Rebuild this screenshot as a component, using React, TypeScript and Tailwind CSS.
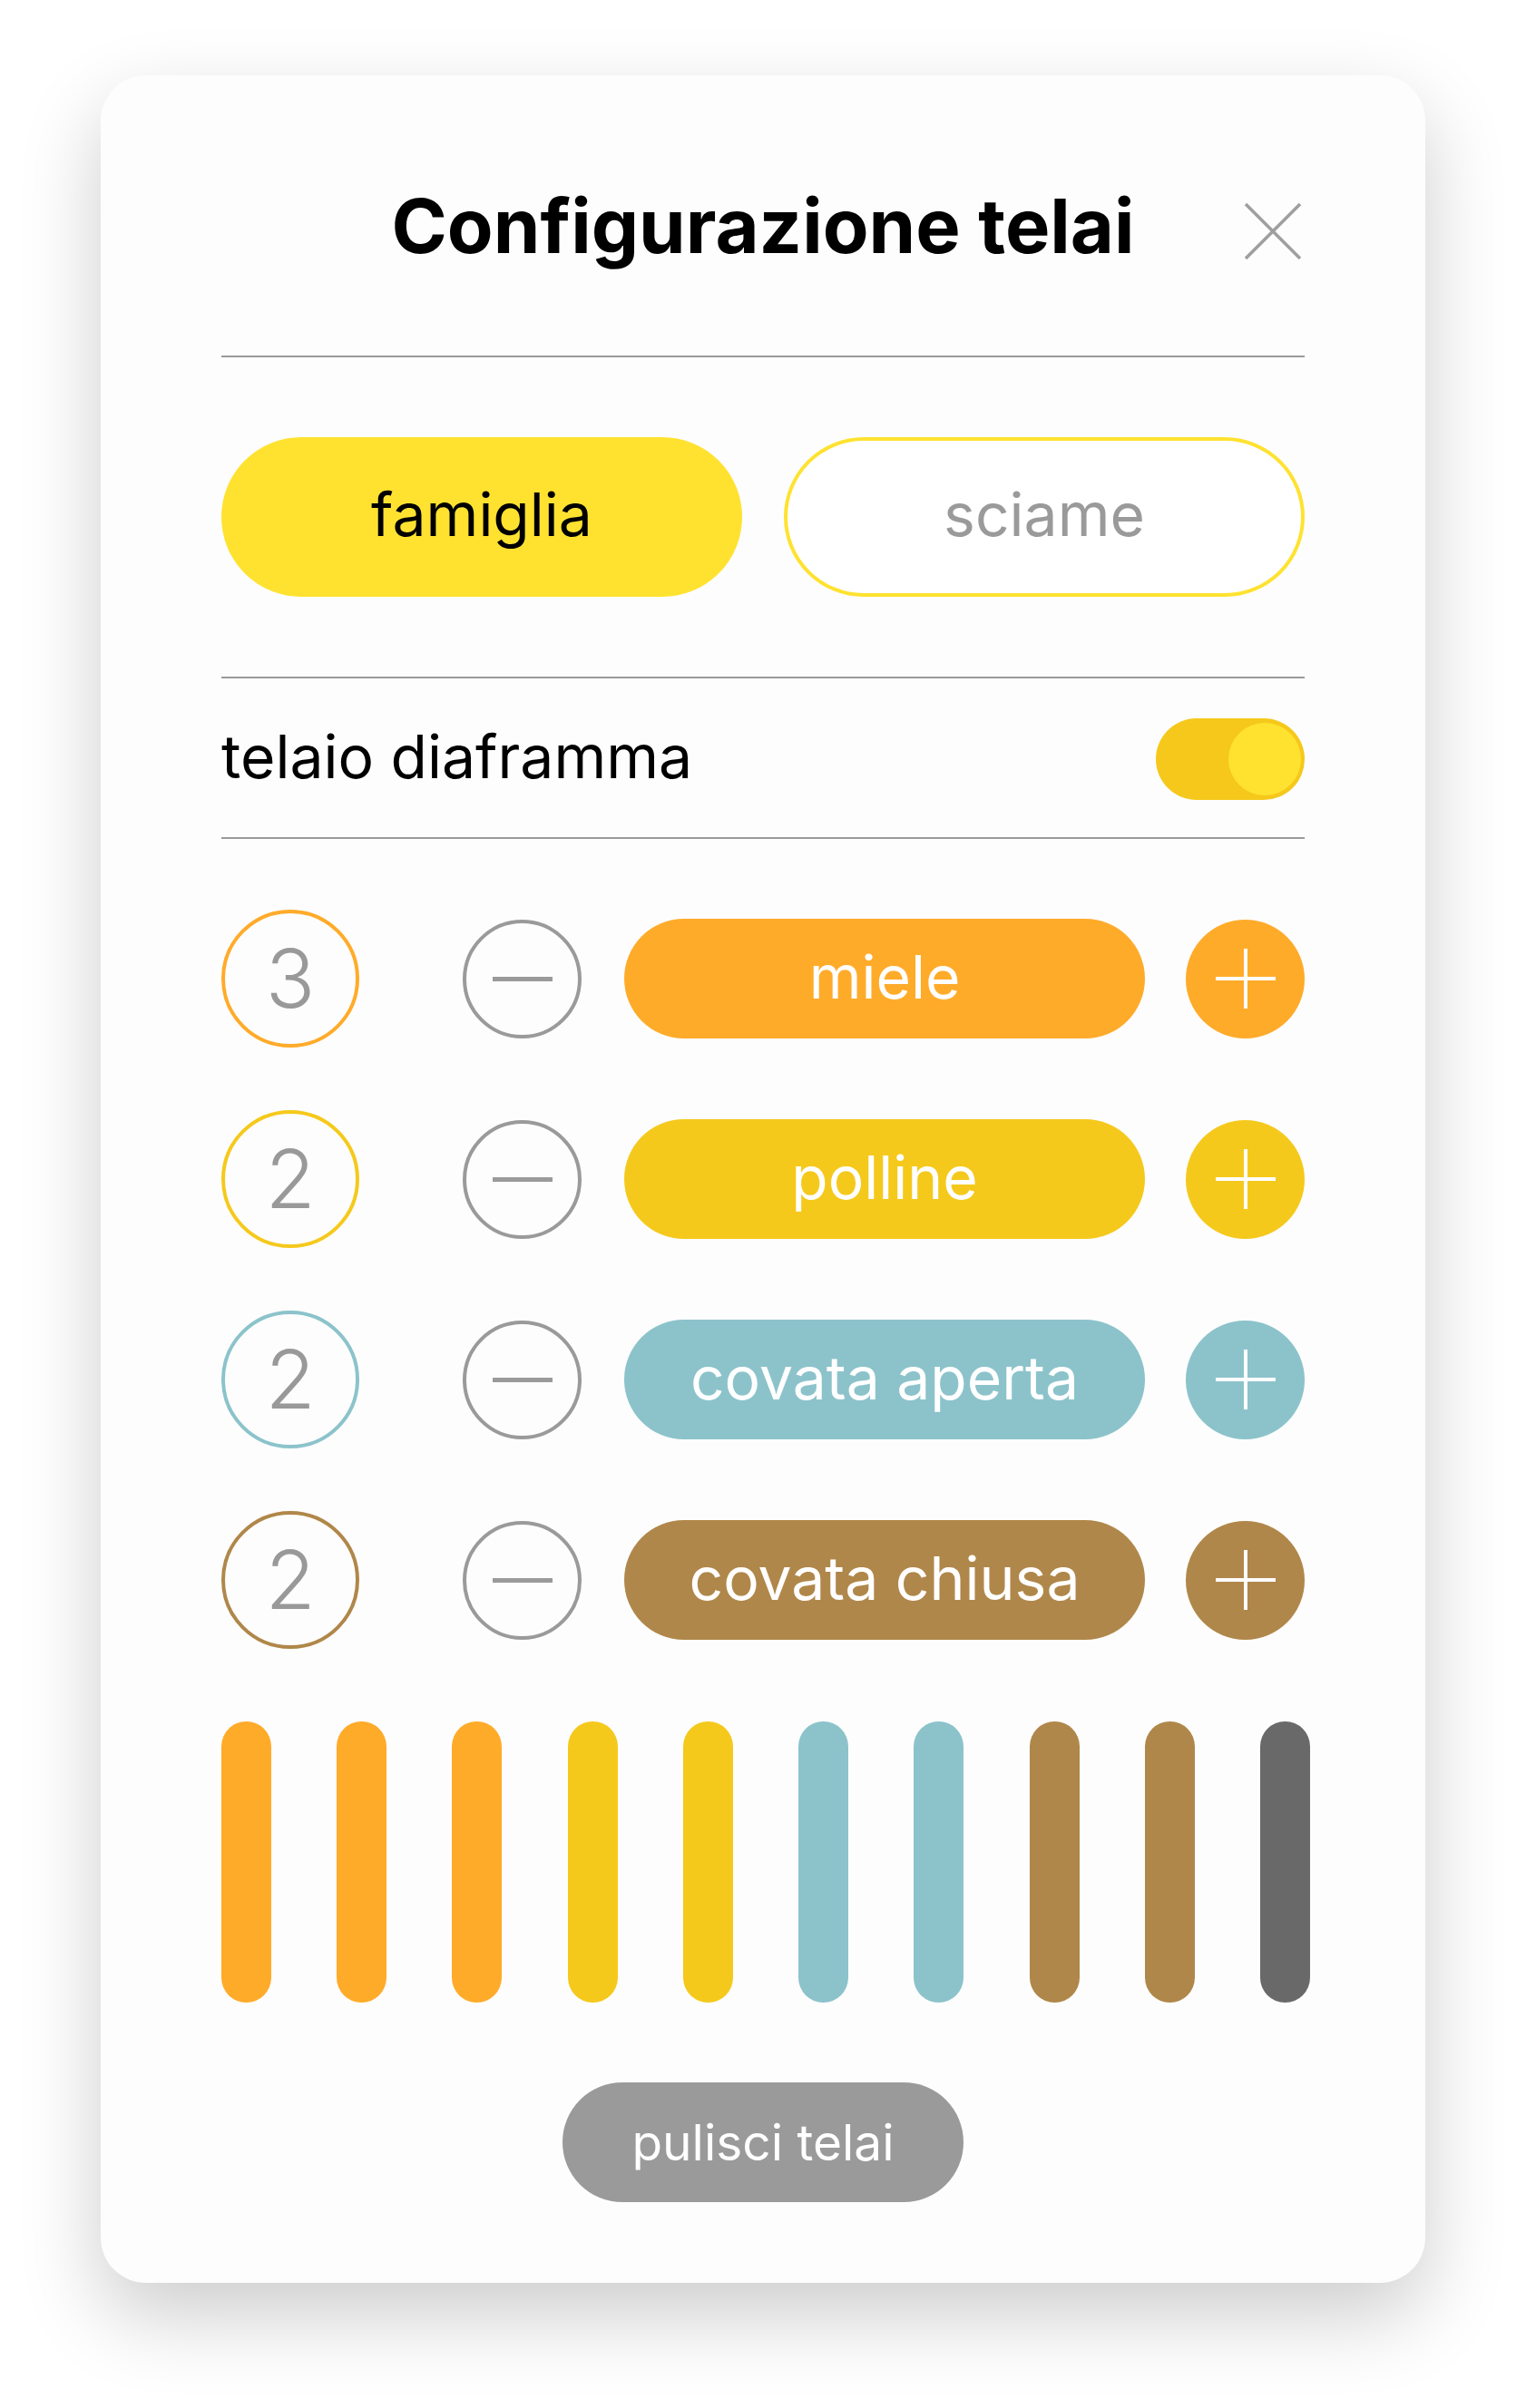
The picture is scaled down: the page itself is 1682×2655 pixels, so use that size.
import React, { useState } from "react";

type Frame = {
  label: string;
  count: number;
  bg: string;
  ring: string;
};

const frames: Frame[] = [
  { label: "miele", count: 3, bg: "bg-[#FFAB2A]", ring: "border-[#FFAB2A]" },
  { label: "polline", count: 2, bg: "bg-[#F5C91C]", ring: "border-[#F5C91C]" },
  { label: "covata aperta", count: 2, bg: "bg-[#8CC3CB]", ring: "border-[#8CC3CB]" },
  { label: "covata chiusa", count: 2, bg: "bg-[#B0874A]", ring: "border-[#B0874A]" },
];

const stripes = [
  "bg-[#FFAB2A]",
  "bg-[#FFAB2A]",
  "bg-[#FFAB2A]",
  "bg-[#F5C91C]",
  "bg-[#F5C91C]",
  "bg-[#8CC3CB]",
  "bg-[#8CC3CB]",
  "bg-[#B0874A]",
  "bg-[#B0874A]",
  "bg-[#696969]",
];

const Divider = ({ className = "" }: { className?: string }) => (
  <div className={`h-[2px] w-full bg-[#9a9a9a] ${className}`} />
);

const FrameRow = ({ frame }: { frame: Frame }) => (
  <div className="flex h-[152px] items-center">
    <div
      className={`flex h-[152px] w-[152px] shrink-0 items-center justify-center rounded-full border-[4px] ${frame.ring}`}
    >
      <span className="text-[90px] font-light leading-none text-[#999999]">
        {frame.count}
      </span>
    </div>
    <button className="ml-[114px] flex h-[131px] w-[131px] shrink-0 items-center justify-center rounded-full border-[4px] border-[#9a9a9a]">
      <span className="block h-[5px] w-[66px] bg-[#9a9a9a]" />
    </button>
    <div
      className={`ml-[47px] flex h-[132px] w-[574px] shrink-0 items-center justify-center rounded-full ${frame.bg}`}
    >
      <span className="mb-[5px] text-[66px] leading-none text-white">
        {frame.label}
      </span>
    </div>
    <button
      className={`ml-[45px] flex h-[131px] w-[131px] shrink-0 items-center justify-center rounded-full ${frame.bg}`}
    >
      <svg width="68" height="68" viewBox="0 0 68 68">
        <line x1="34" y1="1" x2="34" y2="67" stroke="white" strokeWidth="4" />
        <line x1="1" y1="34" x2="67" y2="34" stroke="white" strokeWidth="4" />
      </svg>
    </button>
  </div>
);

export default function App() {
  const [mode, setMode] = useState("famiglia");
  const [diaframma, setDiaframma] = useState(true);

  return (
    <div className="flex min-h-[2655px] w-full justify-center bg-white pt-[83px] font-[Inter,sans-serif]">
      <div className="h-fit w-[1460px] rounded-[50px] bg-[#fdfdfd] px-[133px] pb-[89px] pt-[125px] shadow-[0_36px_90px_rgba(0,0,0,0.2)]">
        <div className="grid grid-cols-[1fr_auto_1fr] items-start">
          <div />
          <h1 className="text-[83px] font-bold leading-none text-black">
            Configurazione telai
          </h1>
          <button className="mr-[3px] mt-[15px] justify-self-end">
            <svg width="64" height="64" viewBox="0 0 64 64">
              <line x1="2" y1="2" x2="62" y2="62" stroke="#9f9f9f" strokeWidth="3.5" />
              <line x1="62" y1="2" x2="2" y2="62" stroke="#9f9f9f" strokeWidth="3.5" />
            </svg>
          </button>
        </div>

        <Divider className="mt-[101px]" />

        <div className="mt-[88px] grid grid-cols-2 gap-[46px]">
          {["famiglia", "sciame"].map((m) => (
            <button
              key={m}
              onClick={() => setMode(m)}
              className={`flex h-[176px] items-center justify-center rounded-full border-[4px] border-[#FFE230] pb-[6px] text-[66px] leading-none ${
                mode === m ? "bg-[#FFE230] text-black" : "bg-white text-[#9a9a9a]"
              }`}
            >
              {m}
            </button>
          ))}
        </div>

        <Divider className="mt-[88px]" />

        <div className="mt-[44px] flex h-[90px] items-center justify-between">
          <span className="mb-[6px] text-[66px] leading-none text-black">
            telaio diaframma
          </span>
          <button
            onClick={() => setDiaframma(!diaframma)}
            className={`flex h-[90px] w-[164px] items-center rounded-full px-[4px] ${
              diaframma ? "justify-end bg-[#F5C81B]" : "justify-start bg-[#d9d9d9]"
            }`}
          >
            <span className="block h-[80px] w-[80px] rounded-full bg-[#FFE230]" />
          </button>
        </div>

        <Divider className="mt-[41px]" />

        <div className="mt-[78px] flex flex-col gap-[69px]">
          {frames.map((f) => (
            <FrameRow key={f.label} frame={f} />
          ))}
        </div>

        <div className="mr-[-6px] mt-[80px] flex justify-between">
          {stripes.map((c, i) => (
            <div key={i} className={`h-[310px] w-[55px] rounded-full ${c}`} />
          ))}
        </div>

        <div className="mt-[88px] flex justify-center">
          <button className="flex h-[132px] w-[442px] items-center justify-center rounded-full bg-[#9a9a9a] text-[55px] leading-none text-white">
            pulisci telai
          </button>
        </div>
      </div>
    </div>
  );
}
